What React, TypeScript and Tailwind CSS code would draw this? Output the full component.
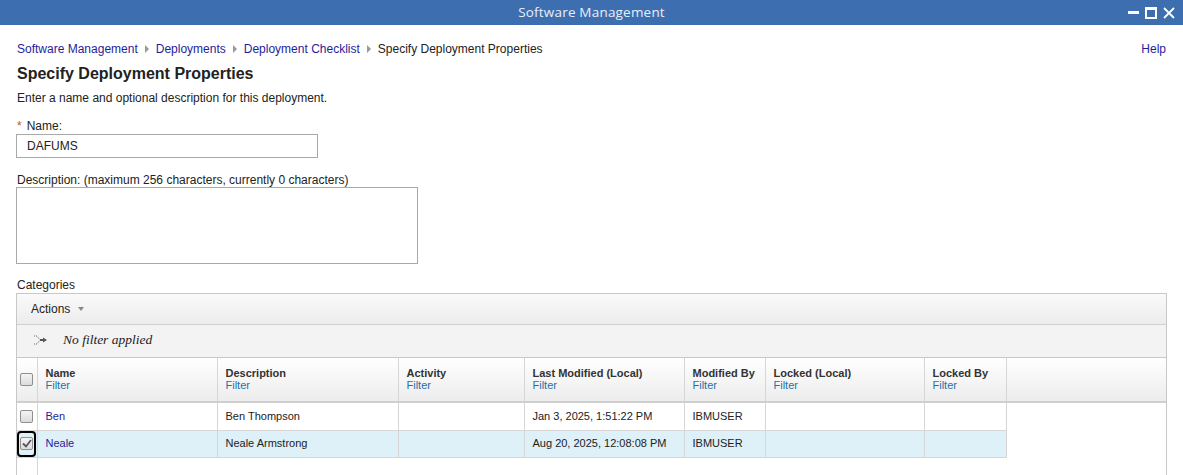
import { useState } from "react";

type Row = {
  name: string;
  description: string;
  activity: string;
  lastModified: string;
  modifiedBy: string;
  lockedLocal: string;
  lockedBy: string;
};

const rows: Row[] = [
  {
    name: "Ben",
    description: "Ben Thompson",
    activity: "",
    lastModified: "Jan 3, 2025, 1:51:22 PM",
    modifiedBy: "IBMUSER",
    lockedLocal: "",
    lockedBy: "",
  },
  {
    name: "Neale",
    description: "Neale Armstrong",
    activity: "",
    lastModified: "Aug 20, 2025, 12:08:08 PM",
    modifiedBy: "IBMUSER",
    lockedLocal: "",
    lockedBy: "",
  },
];

const columns = [
  { label: "Name", width: "w-[180px]" },
  { label: "Description", width: "w-[181px]" },
  { label: "Activity", width: "w-[126px]" },
  { label: "Last Modified (Local)", width: "w-[160px]" },
  { label: "Modified By", width: "w-[81px]" },
  { label: "Locked (Local)", width: "w-[159px]" },
  { label: "Locked By", width: "w-[82px]" },
];

function Checkbox({ checked, focused }: { checked?: boolean; focused?: boolean }) {
  return (
    <span
      className={
        focused
          ? "inline-flex h-[26px] w-[19px] items-center justify-center rounded-[4px] border-2 border-black"
          : "inline-flex h-[26px] w-[19px] items-center justify-center"
      }
    >
      <span className="flex h-[13px] w-[13px] items-center justify-center rounded-[2px] border border-[#8f8f8f] bg-gradient-to-b from-[#f4f4f4] to-[#dcdcdc]">
        {checked && (
          <svg width="10" height="9" viewBox="0 0 10 9">
            <path d="M1 4.5 L4 7.5 L9 1" fill="none" stroke="#555" strokeWidth="1.8" />
          </svg>
        )}
      </span>
    </span>
  );
}

export default function App() {
  const [name, setName] = useState("DAFUMS");
  const [selected, setSelected] = useState<number[]>([1]);

  return (
    <div className="h-[475px] w-[1183px] overflow-hidden bg-white font-['Liberation_Sans',Arial,sans-serif] text-[12px] text-[#222]">
      {/* window title bar */}
      <div className="relative flex h-[25px] items-center justify-center bg-[#3d6fb0]">
        <span className="font-['Open_Sans','Noto_Sans',sans-serif] text-[13.5px] tracking-[0.2px] text-[#e8eef7]">
          Software Management
        </span>
        <div className="absolute right-[8px] top-0 flex h-[25px] items-center gap-[6px]">
          <span className="block h-[3px] w-[11px] bg-white" />
          <span className="block h-[12px] w-[12px] border-2 border-t-[3px] border-white" />
          <svg width="12" height="12" viewBox="0 0 12 12">
            <path d="M1 1 L11 11 M11 1 L1 11" stroke="white" strokeWidth="1.8" />
          </svg>
        </div>
      </div>

      <div className="px-[17px]">
        {/* breadcrumb */}
        <div className="mt-[17px] flex items-center justify-between leading-[14px]">
          <div className="flex items-center">
            {["Software Management", "Deployments", "Deployment Checklist"].map((c) => (
              <span key={c} className="flex items-center">
                <a className="text-[#1e1e9c]">{c}</a>
                <span className="mx-[7px] h-0 w-0 border-y-[4px] border-l-[4px] border-y-transparent border-l-[#999]" />
              </span>
            ))}
            <span className="text-[#222]">Specify Deployment Properties</span>
          </div>
          <a className="mr-0 text-[#1e1e9c]">Help</a>
        </div>

        <h1 className="mt-[8px] text-[16px] font-bold leading-[20px] text-[#222]">
          Specify Deployment Properties
        </h1>
        <p className="mt-[7px] leading-[14px]">Enter a name and optional description for this deployment.</p>

        <div className="mt-[14px] flex items-center leading-[14px]">
          <span className="mr-[5px] text-[#c0561e]">*</span>
          <span>Name:</span>
        </div>
        <input
          value={name}
          onChange={(e) => setName(e.target.value)}
          className="-ml-[1px] mt-[1px] block h-[24px] w-[302px] border border-[#a9a9a9] px-[10px] text-[12px] text-[#222] outline-none"
        />

        <div className="mt-[15px] leading-[14px]">
          Description: (maximum 256 characters, currently 0 characters)
        </div>
        <textarea className="-ml-[1px] block h-[77px] w-[402px] resize-none border border-[#a9a9a9] outline-none" />

        <div className="mt-[14px] leading-[14px]">Categories</div>

        {/* table panel */}
        <div className="-ml-[1px] mt-[1px] w-[1151px] border border-[#c8c8c8] border-b-0">
          <div className="flex h-[31px] items-center border-b border-[#d0d0d0] bg-gradient-to-b from-[#fafafa] to-[#ececec] pl-[14px]">
            <span className="text-[12px] text-[#222]">Actions</span>
            <span className="ml-[8px] h-0 w-0 border-x-[3.5px] border-t-[4px] border-x-transparent border-t-[#888]" />
          </div>
          <div className="flex h-[33px] items-center border-b border-[#c8c8c8] bg-[#f3f3f3] pb-[2px] pl-[16px]">
            <svg width="15" height="14" viewBox="0 0 15 14">
              <path d="M1 3 L4 3 L7 7 L13 7" fill="none" stroke="#666" strokeWidth="1" strokeDasharray="1 1" />
              <path d="M1 11 L4 11 L7 7" fill="none" stroke="#666" strokeWidth="1" strokeDasharray="1 1" />
              <path d="M10 4.5 L14 7 L10 9.5 Z" fill="#555" />
              <path d="M7 7 L11 7" stroke="#555" strokeWidth="2" />
            </svg>
            <span className="ml-[15px] font-['Liberation_Serif','Times_New_Roman',serif] text-[13.5px] italic text-[#222]">
              No filter applied
            </span>
          </div>

          <table className="w-full table-fixed border-collapse">
            <thead>
              <tr className="h-[44px] bg-gradient-to-b from-[#ffffff] to-[#ececec]">
                <th className="w-[20px] border-r border-b-2 border-[#d6d6d6] border-b-[#cfcfcf] p-0 align-middle">
                  <span className="flex justify-center">
                    <Checkbox checked={selected.length === rows.length} />
                  </span>
                </th>
                {columns.map((c) => (
                  <th
                    key={c.label}
                    className={`${c.width} border-r border-b-2 border-[#d6d6d6] border-b-[#cfcfcf] px-[8px] pb-[1px] text-left align-middle font-normal leading-[12px]`}
                  >
                    <div className="text-[11px] font-bold text-[#333]">{c.label}</div>
                    <div className="text-[11px] text-[#1d71ad]">Filter</div>
                  </th>
                ))}
                <th className="border-b-2 border-b-[#cfcfcf] p-0" />
              </tr>
            </thead>
            <tbody>
              {rows.map((r, i) => {
                const isSel = selected.includes(i);
                const cell = `border-r border-b border-[#d6d6d6] px-[8px] text-[11px] text-[#222] ${isSel ? "bg-[#def0f8]" : ""}`;
                return (
                  <tr key={r.name} className={i === 0 ? "h-[28px]" : "h-[27px]"}>
                    <td
                      className={`border-r border-b border-[#d6d6d6] p-0 ${isSel ? "bg-[#def0f8]" : ""}`}
                      onClick={() =>
                        setSelected((s) => (s.includes(i) ? s.filter((x) => x !== i) : [...s, i]))
                      }
                    >
                      <span className="flex justify-center">
                        <Checkbox checked={isSel} focused={isSel} />
                      </span>
                    </td>
                    <td className={cell}>
                      <a className="text-[#1e1e9c]">{r.name}</a>
                    </td>
                    <td className={cell}>{r.description}</td>
                    <td className={cell}>{r.activity}</td>
                    <td className={cell}>{r.lastModified}</td>
                    <td className={cell}>{r.modifiedBy}</td>
                    <td className={cell}>{r.lockedLocal}</td>
                    <td className={cell}>{r.lockedBy}</td>
                    <td className="p-0" />
                  </tr>
                );
              })}
              <tr className="h-[40px]">
                <td className="border-r border-[#d6d6d6] p-0" />
                <td colSpan={8} className="p-0" />
              </tr>
            </tbody>
          </table>
        </div>
      </div>
    </div>
  );
}
